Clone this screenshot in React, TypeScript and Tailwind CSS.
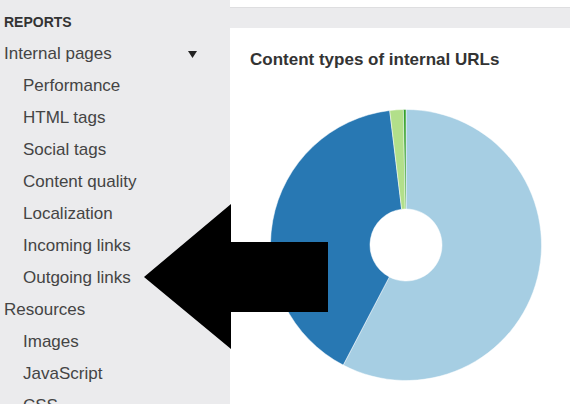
import React from 'react'

interface Slice {
  from: number
  to: number
  color: string
}

const slices: Slice[] = [
  { from: 0, to: 207.6, color: '#a6cee3' },
  { from: 207.6, to: 353.1, color: '#2878b3' },
  { from: 353.1, to: 358.9, color: '#b2df8a' },
  { from: 358.9, to: 360, color: '#33a02c' },
]

// donut arc path, angles clockwise from 12 o'clock
function arcPath(cx: number, cy: number, r: number, r0: number, a0: number, a1: number): string {
  const rad = (a: number) => ((a - 90) * Math.PI) / 180
  const pt = (rr: number, a: number) => `${cx + rr * Math.cos(rad(a))} ${cy + rr * Math.sin(rad(a))}`
  const large = a1 - a0 > 180 ? 1 : 0
  return `M ${pt(r, a0)} A ${r} ${r} 0 ${large} 1 ${pt(r, a1)} L ${pt(r0, a1)} A ${r0} ${r0} 0 ${large} 0 ${pt(r0, a0)} Z`
}

const subItems = ['Performance', 'HTML tags', 'Social tags', 'Content quality', 'Localization', 'Incoming links', 'Outgoing links']
const resourceItems = ['Images', 'JavaScript', 'CSS']

function Sidebar() {
  return (
    <div className="w-[230px] shrink-0 bg-[#ebebed] pt-[6px] text-[17px] text-[#444444]">
      <div className="h-8 flex items-center pl-[4px] text-[14px] font-bold text-[#333333]">REPORTS</div>
      <div className="h-8 flex items-center justify-between pl-[4px] pr-[33px]">
        <span>Internal pages</span>
        <svg width="9" height="7" viewBox="0 0 9 7">
          <polygon points="0,0 9,0 4.5,7" fill="#222" />
        </svg>
      </div>
      {subItems.map((s) => (
        <div key={s} className="h-8 flex items-center pl-[23px]">
          {s}
        </div>
      ))}
      <div className="h-8 flex items-center pl-[4px]">Resources</div>
      {resourceItems.map((s) => (
        <div key={s} className="h-8 flex items-center pl-[23px]">
          {s}
        </div>
      ))}
    </div>
  )
}

function Donut() {
  const c = 136
  return (
    <svg width="272" height="272" viewBox="0 0 272 272">
      {slices.map((s) => (
        <path key={s.color} d={arcPath(c, c, 135.5, 36, s.from, s.to)} fill={s.color} stroke="#fff" strokeWidth="0.5" />
      ))}
    </svg>
  )
}

export default function App() {
  return (
    <div
      className="relative w-[570px] h-[404px] overflow-hidden flex bg-[#ebebed]"
      style={{ fontFamily: '"Liberation Sans", Arial, sans-serif' }}
    >
      <Sidebar />

      <div className="flex-1 flex flex-col gap-[20px]">
        <div className="h-[8px] bg-white border-b border-[#dedee0]" />
        <div className="flex-1 bg-white pl-[20px] pt-[20px]">
          <h2 className="text-[17px] leading-[24px] font-bold text-[#333333]">Content types of internal URLs</h2>
          <div className="mt-[37px] ml-[20px]">
            <Donut />
          </div>
        </div>
      </div>

      {/* big pointer arrow over the page */}
      <svg className="absolute left-0 top-0" width="570" height="404" viewBox="0 0 570 404">
        <polygon points="144,277 231,204 231,242 328,242 328,312 231,312 231,349" fill="#000" />
      </svg>
    </div>
  )
}
